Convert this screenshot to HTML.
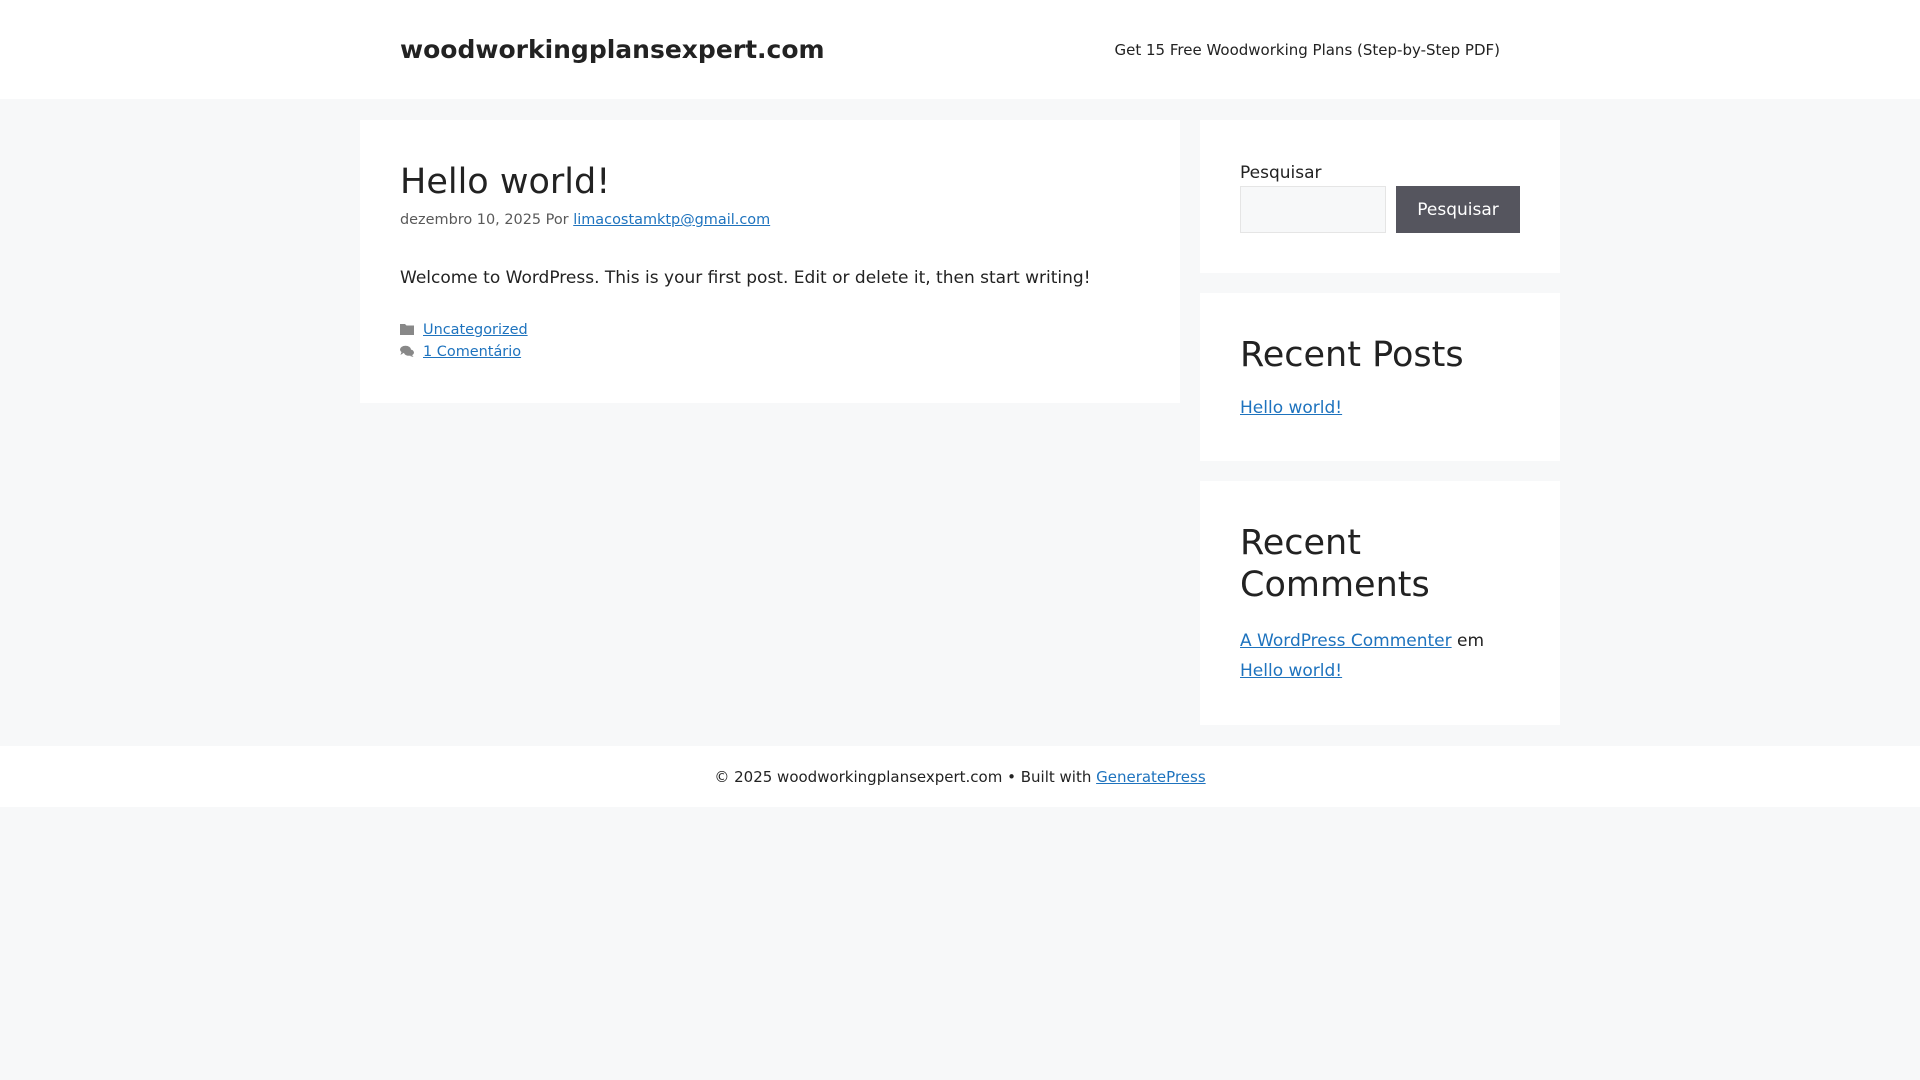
<!DOCTYPE html>
<html><head><meta charset="utf-8"><style>
*{box-sizing:border-box;margin:0;padding:0}
body{width:1920px;height:1080px;background:#f7f8f9;font-family:"DejaVu Sans",sans-serif;color:#222;font-size:17px;line-height:1.7;position:relative;overflow:hidden}
a{color:#1e73be;text-decoration:underline}
.hdr{position:absolute;left:0;top:0;width:1920px;height:99px;background:#fff}
.site{position:absolute;left:400px;top:32px;font-size:25px;font-weight:bold;line-height:36px;color:#222}
.nav{position:absolute;right:420px;top:39px;font-size:15px;line-height:22px;color:#222}
.box{position:absolute;background:#fff}
h1,h2{font-weight:normal;font-size:35px;line-height:1.2;color:#222}
.meta{font-size:14.45px;color:#595959;line-height:1.5}
.foot{position:absolute;left:0;top:746px;width:1920px;height:61px;background:#fff;text-align:center;font-size:15px;line-height:62px}
.ic{display:inline-block;width:14px;height:12px;vertical-align:-1px;margin-right:9px}
</style></head><body>
<div class="hdr"><div class="site">woodworkingplansexpert.com</div><div class="nav">Get 15 Free Woodworking Plans (Step-by-Step PDF)</div></div>

<div class="box" style="left:360px;top:120px;width:820px;height:283px;padding:41px 40px">
<h1>Hello world!</h1>
<div class="meta" style="margin-top:7px">dezembro 10, 2025 Por <a href="#">limacostamktp@gmail.com</a></div>
<p style="margin-top:32px">Welcome to WordPress. This is your first post. Edit or delete it, then start writing!</p>
<div class="meta" style="margin-top:26px;line-height:22px"><svg class="ic" viewBox="0 0 14 12"><path d="M0 1h5l1.5 1.5H14V12H0z" fill="#888"/></svg><a href="#">Uncategorized</a><br><svg class="ic" viewBox="0 0 14 12"><ellipse cx="5.5" cy="4.5" rx="5.5" ry="3.8" fill="#888"/><path d="M1.5 7l-1 3 3-2z" fill="#888"/><ellipse cx="9" cy="7.5" rx="5" ry="3.3" fill="#888"/><path d="M12 10l1.5 2-3.5-1z" fill="#888"/></svg><a href="#">1 Comentário</a></div>
</div>

<div class="box" style="left:1200px;top:120px;width:360px;height:153px;padding:40px">
<div style="position:absolute;left:40px;top:41px;line-height:24px">Pesquisar</div>
<div style="position:absolute;left:40px;top:66px;width:146px;height:47px;background:#f7f8f9;border:1px solid #e5e5e5"></div>
<div style="position:absolute;left:196px;top:66px;width:124px;height:47px;background:#55555e;color:#fff;text-align:center;line-height:49px">Pesquisar</div>
</div>

<div class="box" style="left:1200px;top:293px;width:360px;height:168px;padding:41px 40px">
<h2>Recent Posts</h2>
<div style="margin-top:18px"><a href="#">Hello world!</a></div>
</div>

<div class="box" style="left:1200px;top:481px;width:360px;height:244px;padding:41px 40px">
<h2>Recent<br>Comments</h2>
<div style="margin-top:20px;line-height:30px"><a href="#">A WordPress Commenter</a> em <a href="#">Hello world!</a></div>
</div>

<div class="foot">© 2025 woodworkingplansexpert.com • Built with <a href="#">GeneratePress</a></div>
</body></html>
